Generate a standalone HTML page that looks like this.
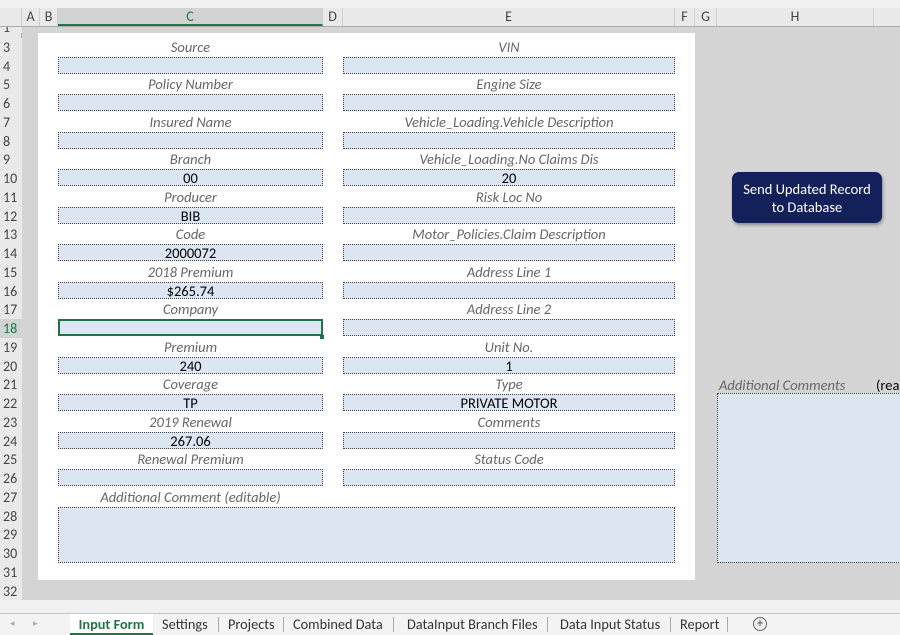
<!DOCTYPE html>
<html><head><meta charset="utf-8"><style>
*{margin:0;padding:0;box-sizing:border-box}
body{width:900px;height:635px;overflow:hidden;background:#d4d4d4;font-family:Calibri,"Carlito","Liberation Sans",sans-serif;font-size:14.5px;position:relative}
.a{position:absolute}
.hdr{left:0;top:8px;width:900px;height:19px;background:#e9e9e9;border-bottom:1px solid #ababab}
.hc{position:absolute;top:0;height:18px;line-height:18px;text-align:center;color:#444;border-right:1px solid #d0d0d0;font-size:14px}
.rn{position:absolute;left:0;width:22px;height:19px;line-height:19px;font-size:14px;color:#444;padding-left:3px;background:#e9e9e9}
.lab{position:absolute;height:19px;line-height:19px;text-align:center;font-style:italic;color:#666}
.f{position:absolute;height:17px;line-height:17px;text-align:center;background:#dce6f2;border:1px dotted #444;color:#000}
.tab{position:absolute;top:614px;height:21px;line-height:20px;color:#333;font-size:14.3px}
.sep{position:absolute;top:617px;width:1px;height:15px;background:#aaa}
</style></head><body>
<div class="a" style="left:0;top:0;width:900px;height:8px;background:#f0f0f0"></div>
<div class="a hdr">
<div class="hc" style="left:0;width:22px;background:#e9e9e9"></div>
<div class="hc" style="left:22px;width:18px">A</div>
<div class="hc" style="left:40px;width:18px">B</div>
<div class="hc" style="left:58px;width:265px;color:#217346;background:#d2d2d2;border-bottom:2px solid #217346">C</div>
<div class="hc" style="left:323px;width:20px">D</div>
<div class="hc" style="left:343px;width:332px">E</div>
<div class="hc" style="left:675px;width:20px">F</div>
<div class="hc" style="left:695px;width:22px">G</div>
<div class="hc" style="left:717px;width:157px">H</div>
</div>
<div class="a" style="left:0;top:27px;width:22px;height:573px;background:#e9e9e9;border-right:1px solid #ababab"></div>
<div class="rn" style="top:27px;height:6px;overflow:hidden;line-height:2px">1</div>
<div class="rn" style="top:38px">3</div><div class="rn" style="top:57px">4</div><div class="rn" style="top:75px">5</div><div class="rn" style="top:94px">6</div><div class="rn" style="top:113px">7</div><div class="rn" style="top:132px">8</div><div class="rn" style="top:150px">9</div><div class="rn" style="top:169px">10</div><div class="rn" style="top:188px">11</div><div class="rn" style="top:207px">12</div><div class="rn" style="top:225px">13</div><div class="rn" style="top:244px">14</div><div class="rn" style="top:263px">15</div><div class="rn" style="top:282px">16</div><div class="rn" style="top:300px">17</div><div class="rn" style="top:319px;color:#217346;background:#d2d2d2">18</div><div class="rn" style="top:338px">19</div><div class="rn" style="top:357px">20</div><div class="rn" style="top:375px">21</div><div class="rn" style="top:394px">22</div><div class="rn" style="top:413px">23</div><div class="rn" style="top:432px">24</div><div class="rn" style="top:450px">25</div><div class="rn" style="top:469px">26</div><div class="rn" style="top:488px">27</div><div class="rn" style="top:507px">28</div><div class="rn" style="top:525px">29</div><div class="rn" style="top:544px">30</div><div class="rn" style="top:563px">31</div><div class="rn" style="top:582px">32</div>

<div class="a" style="left:38px;top:33px;width:657px;height:547px;background:#fff"></div>

<div class="lab" style="left:58px;width:265px;top:38px">Source</div>
<div class="f" style="left:58px;width:265px;top:57px"></div>
<div class="lab" style="left:58px;width:265px;top:75px">Policy Number</div>
<div class="f" style="left:58px;width:265px;top:94px"></div>
<div class="lab" style="left:58px;width:265px;top:113px">Insured Name</div>
<div class="f" style="left:58px;width:265px;top:132px"></div>
<div class="lab" style="left:58px;width:265px;top:150px">Branch</div>
<div class="f" style="left:58px;width:265px;top:169px">00</div>
<div class="lab" style="left:58px;width:265px;top:188px">Producer</div>
<div class="f" style="left:58px;width:265px;top:207px">BIB</div>
<div class="lab" style="left:58px;width:265px;top:225px">Code</div>
<div class="f" style="left:58px;width:265px;top:244px">2000072</div>
<div class="lab" style="left:58px;width:265px;top:263px">2018 Premium</div>
<div class="f" style="left:58px;width:265px;top:282px">$265.74</div>
<div class="lab" style="left:58px;width:265px;top:300px">Company</div>
<div class="f" style="left:58px;width:265px;top:319px;border:1px solid #217346;box-shadow:inset 0 0 0 1px #217346"></div>
<div class="a" style="left:320px;top:335px;width:4px;height:4px;background:#217346"></div>
<div class="lab" style="left:58px;width:265px;top:338px">Premium</div>
<div class="f" style="left:58px;width:265px;top:357px">240</div>
<div class="lab" style="left:58px;width:265px;top:375px">Coverage</div>
<div class="f" style="left:58px;width:265px;top:394px">TP</div>
<div class="lab" style="left:58px;width:265px;top:413px">2019 Renewal</div>
<div class="f" style="left:58px;width:265px;top:432px">267.06</div>
<div class="lab" style="left:58px;width:265px;top:450px">Renewal Premium</div>
<div class="f" style="left:58px;width:265px;top:469px"></div>

<div class="lab" style="left:343px;width:332px;top:38px">VIN</div>
<div class="f" style="left:343px;width:332px;top:57px"></div>
<div class="lab" style="left:343px;width:332px;top:75px">Engine Size</div>
<div class="f" style="left:343px;width:332px;top:94px"></div>
<div class="lab" style="left:343px;width:332px;top:113px">Vehicle_Loading.Vehicle Description</div>
<div class="f" style="left:343px;width:332px;top:132px"></div>
<div class="lab" style="left:343px;width:332px;top:150px">Vehicle_Loading.No Claims Dis</div>
<div class="f" style="left:343px;width:332px;top:169px">20</div>
<div class="lab" style="left:343px;width:332px;top:188px">Risk Loc No</div>
<div class="f" style="left:343px;width:332px;top:207px"></div>
<div class="lab" style="left:343px;width:332px;top:225px">Motor_Policies.Claim Description</div>
<div class="f" style="left:343px;width:332px;top:244px"></div>
<div class="lab" style="left:343px;width:332px;top:263px">Address Line 1</div>
<div class="f" style="left:343px;width:332px;top:282px"></div>
<div class="lab" style="left:343px;width:332px;top:300px">Address Line 2</div>
<div class="f" style="left:343px;width:332px;top:319px"></div>
<div class="lab" style="left:343px;width:332px;top:338px">Unit No.</div>
<div class="f" style="left:343px;width:332px;top:357px">1</div>
<div class="lab" style="left:343px;width:332px;top:375px">Type</div>
<div class="f" style="left:343px;width:332px;top:394px">PRIVATE MOTOR</div>
<div class="lab" style="left:343px;width:332px;top:413px">Comments</div>
<div class="f" style="left:343px;width:332px;top:432px"></div>
<div class="lab" style="left:343px;width:332px;top:450px">Status Code</div>
<div class="f" style="left:343px;width:332px;top:469px"></div>

<div class="lab" style="left:58px;width:265px;top:488px">Additional Comment (editable)</div>
<div class="f" style="left:58px;width:617px;top:507px;height:56px"></div>

<div class="a" style="left:732px;top:172px;width:150px;height:51px;background:#13205a;border-radius:7px;box-shadow:1px 2px 3px rgba(0,0,0,.35);color:#fff;text-align:center;line-height:18px;padding-top:8px">Send Updated Record<br>to Database</div>

<div class="a" style="left:719px;top:376px;line-height:19px;font-style:italic;color:#666">Additional Comments</div>
<div class="a" style="left:876px;top:376px;line-height:19px;color:#000">(rea</div>
<div class="f" style="left:717px;top:393px;width:190px;height:170px"></div>

<div class="a" style="left:0;top:600px;width:900px;height:14px;background:#f0f0f0"></div>
<div class="a" style="left:0;top:613px;width:900px;height:22px;background:#f3f3f3;border-top:1px solid #c8c8c8"></div>
<div class="tab" style="left:10px;color:#aaa;font-size:9px">◂</div>
<div class="tab" style="left:33px;color:#aaa;font-size:9px">▸</div>
<div class="tab" style="left:70px;width:83px;background:#fff;text-align:center;font-weight:bold;color:#217346;border-bottom:2px solid #217346">Input Form</div>
<div class="tab" style="left:162px">Settings</div>
<div class="sep" style="left:218px"></div>
<div class="tab" style="left:228px">Projects</div>
<div class="sep" style="left:283px"></div>
<div class="tab" style="left:293px">Combined Data</div>
<div class="sep" style="left:393px"></div>
<div class="tab" style="left:407px">DataInput Branch Files</div>
<div class="sep" style="left:547px"></div>
<div class="tab" style="left:560px">Data Input Status</div>
<div class="sep" style="left:670px"></div>
<div class="tab" style="left:680px">Report</div>
<div class="sep" style="left:727px"></div>
<div class="a" style="left:753px;top:617px;width:14px;height:14px;border:1px solid #666;border-radius:50%;text-align:center;line-height:11px;font-size:13px;color:#444">+</div>
</body></html>
